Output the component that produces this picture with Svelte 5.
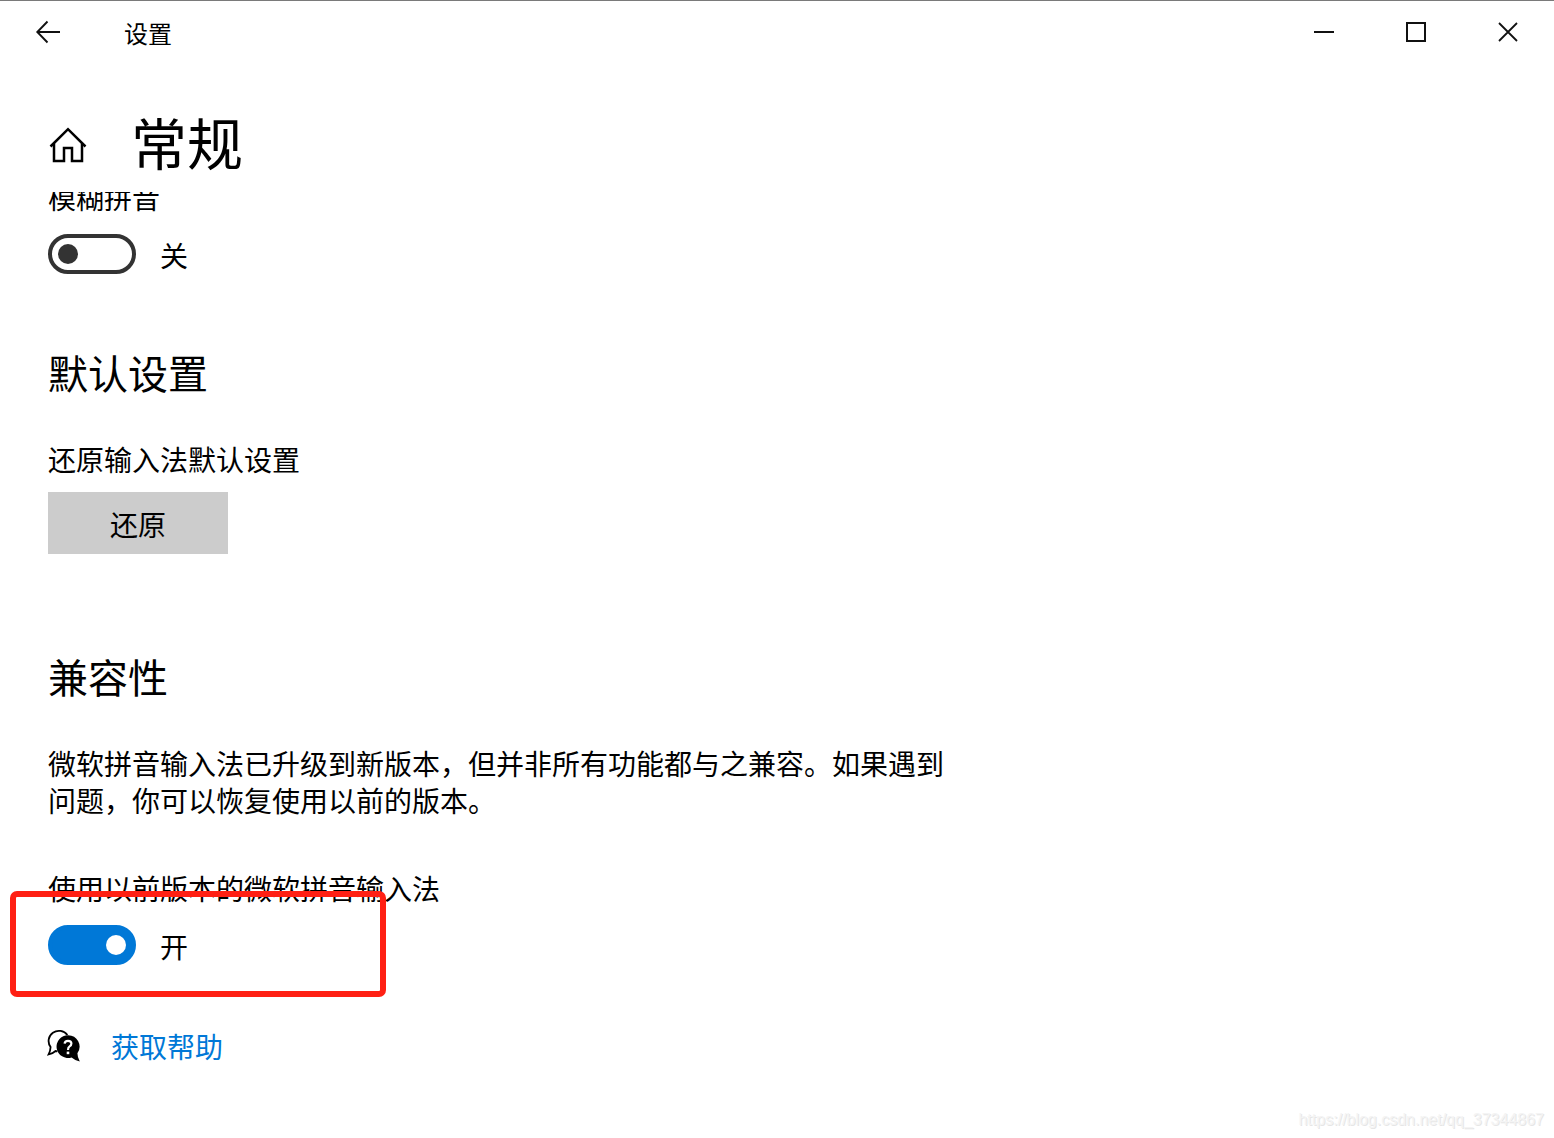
<script>
  let fuzzyPinyin = $state(false);
  let previousVersion = $state(true);

  function restoreDefaults() {
    fuzzyPinyin = false;
    previousVersion = false;
  }
</script>

<div class="window">
  <header class="titlebar">
    <button type="button" class="back" aria-label="返回">
      <svg width="26" height="24" viewBox="0 0 26 24" fill="none" stroke="#111" stroke-width="1.9">
        <path d="M12.5 1.5 L2.3 12 L12.5 22.5 M2.3 12 H25" />
      </svg>
    </button>
    <span class="caption">设置</span>
    <div class="controls">
      <button type="button" aria-label="最小化">
        <svg width="20" height="20" viewBox="0 0 20 20"><path d="M0 10 H20" stroke="#111" stroke-width="2" /></svg>
      </button>
      <button type="button" aria-label="最大化">
        <svg width="20" height="20" viewBox="0 0 20 20"><rect x="1" y="1" width="18" height="18" fill="none" stroke="#111" stroke-width="2" /></svg>
      </button>
      <button type="button" aria-label="关闭">
        <svg width="20" height="20" viewBox="0 0 20 20"><path d="M1 1 L19 19 M19 1 L1 19" stroke="#111" stroke-width="1.8" /></svg>
      </button>
    </div>
  </header>

  <div class="page-head">
    <button type="button" class="home" aria-label="主页">
      <svg width="38" height="36" viewBox="0 0 38 36" fill="none" stroke="#000" stroke-width="2.5">
        <path d="M1.5 19.5 L19 2.2 L36.5 19.5" />
        <path d="M5 16.5 V34 H15 V21 H23 V34 H33 V16.5" />
      </svg>
    </button>
    <h1>常规</h1>
  </div>

  <main>
    <section class="setting first">
      <label for="fuzzy">模糊拼音</label>
      <div class="toggle-row">
        <input id="fuzzy" type="checkbox" role="switch" bind:checked={fuzzyPinyin} />
        <span>{fuzzyPinyin ? '开' : '关'}</span>
      </div>
    </section>

    <section class="group">
      <h2>默认设置</h2>
      <p>还原输入法默认设置</p>
      <button type="button" class="restore" onclick={restoreDefaults}>还原</button>
    </section>

    <section class="group compat">
      <h2>兼容性</h2>
      <p>微软拼音输入法已升级到新版本，但并非所有功能都与之兼容。如果遇到问题，你可以恢复使用以前的版本。</p>
      <div class="setting marked">
        <label for="previous">使用以前版本的微软拼音输入法</label>
        <div class="toggle-row">
          <input id="previous" type="checkbox" role="switch" bind:checked={previousVersion} />
          <span>{previousVersion ? '开' : '关'}</span>
        </div>
      </div>
    </section>

    <div class="help">
      <svg width="34" height="34" viewBox="0 0 34 34">
        <path d="M20.4 6 A10 9.8 0 1 0 3.6 18 Q3.4 22 1.6 25.4 Q6 24.4 8.6 22 L10.4 22.4" fill="none" stroke="#000" stroke-width="1.8" />
        <path d="M21 6.2 A11.4 11.4 0 0 1 30.4 24.2 Q30.4 28 32.8 32.4 Q27.6 31.2 24.6 28.4 A11.4 11.4 0 1 1 21 6.2 Z" fill="#000" />
        <path d="M17.6 14.6 Q17.8 11.8 21 11.8 Q24.4 11.8 24.4 14.6 Q24.4 16.4 22.6 17.4 Q21 18.4 21 21" fill="none" stroke="#fff" stroke-width="2.2" />
        <rect x="19.7" y="22.6" width="2.6" height="2.6" fill="#fff" />
      </svg>
      <a href="#help">获取帮助</a>
    </div>
  </main>

  <div class="watermark">https://blog.csdn.net/qq_37344867</div>
</div>

<style>
  :global(body) {
    margin: 0;
    background: #fff;
  }

  .window {
    position: relative;
    min-height: 100vh;
    box-sizing: border-box;
    border-top: 1px solid #7a7a7a;
    color: #000;
    font-family: 'Noto Sans CJK SC', sans-serif;
    font-size: 28px;
    line-height: 37px;
  }

  button {
    border: none;
    padding: 0;
    background: transparent;
    font: inherit;
    color: inherit;
  }

  svg {
    display: block;
  }

  .titlebar {
    display: flex;
    align-items: center;
    height: 62px;
  }

  .back {
    display: flex;
    align-items: center;
    justify-content: center;
    width: 96px;
    height: 62px;
  }

  .caption {
    padding-left: 28px;
    font-size: 24px;
  }

  .controls {
    display: flex;
    margin-left: auto;
  }

  .controls button {
    display: flex;
    align-items: center;
    justify-content: center;
    width: 92px;
    height: 62px;
  }

  .page-head {
    display: flex;
    align-items: center;
    gap: 44px;
    height: 129px;
    padding-left: 49px;
  }

  .home {
    margin-top: 34px;
  }

  h1 {
    margin: 26px 0 0;
    font-size: 56px;
    line-height: 74px;
    font-weight: 400;
  }

  main {
    overflow: hidden;
    padding: 0 48px 48px;
  }

  .setting label {
    display: block;
  }

  .first {
    margin-top: -13px;
  }

  .toggle-row {
    display: flex;
    align-items: center;
    gap: 24px;
    height: 40px;
    margin-top: 18px;
  }

  .toggle-row span {
    padding-top: 2px;
  }

  input {
    appearance: none;
    display: flex;
    align-items: center;
    box-sizing: border-box;
    width: 88px;
    height: 40px;
    margin: 0;
    padding: 0 6px;
    border: 4px solid #333;
    border-radius: 20px;
  }

  input::before {
    content: '';
    width: 20px;
    height: 20px;
    border-radius: 50%;
    background: #333;
  }

  input:checked {
    justify-content: flex-end;
    border-color: #0078d7;
    background: #0078d7;
  }

  input:checked::before {
    background: #fff;
  }

  .group {
    margin-top: 72px;
  }

  .compat {
    margin-top: 96px;
  }

  h2 {
    margin: 0;
    font-size: 40px;
    line-height: 52px;
    font-weight: 400;
  }

  p {
    max-width: 900px;
    margin: 43px 0 0;
  }

  .restore {
    display: block;
    width: 180px;
    height: 62px;
    margin-top: 14px;
    padding-top: 2px;
    background: #ccc;
  }

  .marked {
    position: relative;
    margin-top: 51px;
  }

  /* red frame drawn over the switch */
  .marked::after {
    content: '';
    position: absolute;
    left: -38px;
    top: 21px;
    width: 364px;
    height: 94px;
    border: 6px solid #ff2014;
    border-radius: 7px;
    pointer-events: none;
  }

  .help {
    display: flex;
    align-items: center;
    gap: 30px;
    margin-top: 63px;
  }

  .help svg {
    margin: 0 0 2px -1px;
  }

  a {
    color: #0078d7;
    text-decoration: none;
  }

  .watermark {
    position: absolute;
    right: 10px;
    bottom: 8px;
    color: #f4f4f4;
    font-family: 'Liberation Sans', Arial, sans-serif;
    font-size: 16px;
    line-height: 20px;
    text-shadow: 1px 1px 0 #e6e6e6;
  }
</style>
